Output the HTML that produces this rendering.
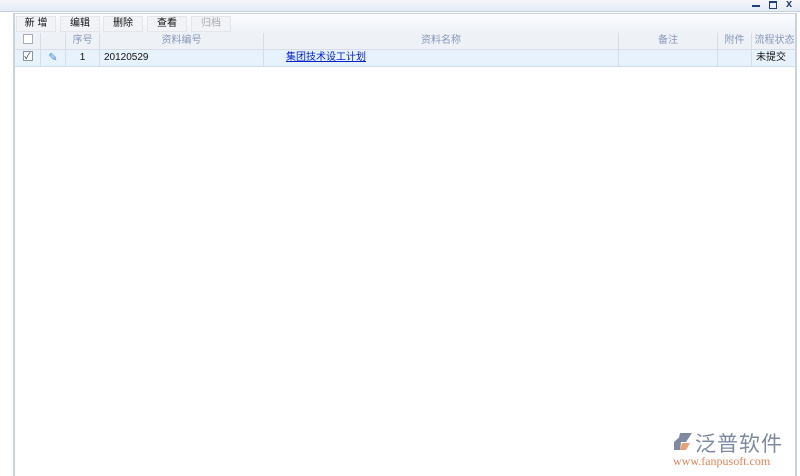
<!DOCTYPE html>
<html><head><meta charset="utf-8"><style>
*{margin:0;padding:0;box-sizing:border-box}
body{width:800px;height:476px;background:#fff;position:relative;overflow:hidden;font-family:"Liberation Sans","Noto Sans CJK SC",sans-serif;font-size:10px}
.top{position:absolute;left:0;top:0;width:800px;height:12px;background:linear-gradient(#f4f6fb,#e6ebf4);border-bottom:1px solid #c5d0e2}
.panel{position:absolute;left:13px;top:13px;width:784px;height:463px;border-left:2px solid #c9d3e4;border-right:2px solid #c9d3e4;border-top:1px solid #c9d3e4}
.tb{position:absolute;left:0;top:0;width:100%;height:19px;background:linear-gradient(#fbfcfe,#eef2f8)}
.btn{position:absolute;top:2px;height:16px;background:#f1f3f6;border:1px solid #e2e5ea;color:#111;font-size:10px;text-align:center;line-height:14px}
.cell{position:absolute;border-right:1px solid #d5dde9;text-align:center;line-height:16px;height:16px}
.hdr{position:absolute;left:0;top:19px;width:100%;height:17px;background:#eef1f6;border-bottom:1px solid #d5dde9;color:#8898bb}
.row{position:absolute;left:0;top:36px;width:100%;height:17px;background:#e8f2fc;border-bottom:1px solid #cfdff0;color:#111}
.cb{display:inline-block;width:10px;height:10px;border:1px solid #8a94a6;background:#fff;vertical-align:middle;margin-top:-2px;font-size:9px;line-height:8px;color:#334}
</style></head><body>
<div class="top"></div>
<div style="position:absolute;left:752px;top:5px;width:8px;height:2px;background:#1e3f7a"></div>
<div style="position:absolute;left:769px;top:1px;width:8px;height:8px;border:1px solid #1e3f7a;border-top-width:2px"></div>
<div style="position:absolute;left:786px;top:-2px;font-size:11px;font-weight:bold;color:#1e3f7a">x</div>
<div class="panel">
 <div class="tb">
  <div class="btn" style="left:1px;width:40px">新 增</div>
  <div class="btn" style="left:45px;width:40px">编辑</div>
  <div class="btn" style="left:88px;width:40px">删除</div>
  <div class="btn" style="left:132px;width:40px">查看</div>
  <div class="btn" style="left:176px;width:40px;color:#aaa">归档</div>
 </div>
 <div class="hdr">
  <div class="cell" style="left:0;width:26px"><span class="cb" style="border-color:#aab"></span></div>
  <div class="cell" style="left:26px;width:25px"></div>
  <div class="cell" style="left:51px;width:34px">序号</div>
  <div class="cell" style="left:85px;width:164px">资料编号</div>
  <div class="cell" style="left:249px;width:355px">资料名称</div>
  <div class="cell" style="left:604px;width:99px">备注</div>
  <div class="cell" style="left:703px;width:34px">附件</div>
  <div class="cell" style="left:737px;width:45px;border:0">流程状态</div>
 </div>
 <div class="row">
  <div class="cell" style="left:0;width:26px"><span class="cb">✓</span></div>
  <div class="cell" style="left:26px;width:25px;color:#3a8ad8;font-size:11px">✎</div>
  <div class="cell" style="left:51px;width:34px">1</div>
  <div class="cell" style="left:85px;width:164px;text-align:left;padding-left:4px">20120529</div>
  <div class="cell" style="left:249px;width:355px;text-align:left;padding-left:22px"><span style="color:#0022cc;text-decoration:underline">集团技术设工计划</span></div>
  <div class="cell" style="left:604px;width:99px"></div>
  <div class="cell" style="left:703px;width:34px"></div>
  <div class="cell" style="left:737px;width:45px;border:0;text-align:left;padding-left:4px">未提交</div>
 </div>
</div>
<svg style="position:absolute;left:672px;top:432px" width="22" height="20"><path d="M8 1 L20 1 L14 10 L6 10 Z" fill="#7d8aa0"/><path d="M2 10 L10 3 L8 18 L2 18 Z" fill="#7d8aa0"/><path d="M10 11 L18 11 L14 18 L8 18 Z" fill="#e8a07a"/></svg>
<div style="position:absolute;left:695px;top:428px;font-size:21px;color:#7d8aa0;letter-spacing:1px">泛普软件</div>
<div style="position:absolute;left:673px;top:454px;font-family:'Liberation Serif',serif;font-size:12px;color:#e0845a">www.fanpusoft.com</div>
</body></html>
